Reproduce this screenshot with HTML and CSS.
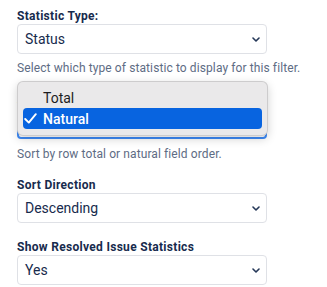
FILE: index.html
```html
<!DOCTYPE html>
<html>
<head>
<meta charset="utf-8">
<link rel="stylesheet" href="styles.css">
</head>
<body>
<div class="form">
  <div class="field">
    <div class="label">Statistic Type:</div>
    <div class="select"><span class="value">Status</span><svg class="chev" width="8" height="5" viewBox="0 0 8 5"><path d="M1 1 L4 4 L7 1" fill="none" stroke="#253858" stroke-width="1.6" stroke-linecap="round" stroke-linejoin="round"/></svg></div>
    <div class="help">Select which type of statistic to display for this filter.</div>
  </div>
  <div class="field sort-by">
    <div class="label">Sort By</div>
    <div class="anchor">
      <div class="select focused"><span class="value">Natural</span><svg class="chev" width="8" height="5" viewBox="0 0 8 5"><path d="M1 1 L4 4 L7 1" fill="none" stroke="#253858" stroke-width="1.6" stroke-linecap="round" stroke-linejoin="round"/></svg></div>
      <div class="menu">
        <div class="opt"><span class="check"></span><span>Total</span></div>
        <div class="opt active"><span class="check"><svg width="13" height="11" viewBox="0 0 13 11"><path d="M1.2 6 L4.8 9.6 L11.8 1.2" fill="none" stroke="#ffffff" stroke-width="1.9" stroke-linecap="round" stroke-linejoin="round"/></svg></span><span>Natural</span></div>
      </div>
    </div>
    <div class="help">Sort by row total or natural field order.</div>
  </div>
  <div class="field sort-dir">
    <div class="label">Sort Direction</div>
    <div class="select"><span class="value">Descending</span><svg class="chev" width="8" height="5" viewBox="0 0 8 5"><path d="M1 1 L4 4 L7 1" fill="none" stroke="#253858" stroke-width="1.6" stroke-linecap="round" stroke-linejoin="round"/></svg></div>
  </div>
  <div class="field">
    <div class="label">Show Resolved Issue Statistics</div>
    <div class="select"><span class="value">Yes</span><svg class="chev" width="8" height="5" viewBox="0 0 8 5"><path d="M1 1 L4 4 L7 1" fill="none" stroke="#253858" stroke-width="1.6" stroke-linecap="round" stroke-linejoin="round"/></svg></div>
  </div>
</div>
</body>
</html>
```
FILE: styles.css
```css
html, body {
  margin: 0;
  padding: 0;
  background: #ffffff;
}
body {
  font-family: Roboto, "Liberation Sans", Arial, sans-serif;
  color: #172b4d;
  overflow: hidden;
}
.form {
  padding: 8px 0 0 17px;
}
.field + .field {
  margin-top: 16px;
}
.field.sort-by {
  margin-top: 17px;
}
.field.sort-dir {
  margin-top: 15px;
}
.sort-by .help {
  margin-top: 7px;
}
.label {
  font-size: 12px;
  font-weight: 700;
  line-height: 16px;
  letter-spacing: 0.3px;
  color: #172b4d;
  white-space: nowrap;
}
.select {
  box-sizing: border-box;
  height: 30px;
  width: 250px;
  border: 1px solid #dfe1e6;
  border-radius: 4px;
  background: #fff;
  display: flex;
  align-items: center;
  justify-content: space-between;
  padding: 0 6px 0 7px;
}
.select.focused {
  border: 2px solid #3d8af7;
  padding-left: 6px;
}
.value {
  font-size: 14px;
  color: #172b4d;
}
.chev {
  display: block;
}
.help {
  margin-top: 6px;
  font-size: 12px;
  line-height: 16px;
  letter-spacing: 0.1px;
  color: #5e6c84;
  white-space: nowrap;
}
.anchor {
  position: relative;
  width: 250px;
}
.menu {
  position: absolute;
  left: 0;
  top: -28px;
  width: 251px;
  box-sizing: border-box;
  padding: 5px 5px 6px;
  background: #eae9ea;
  border: 1px solid rgba(0, 0, 0, 0.12);
  border-radius: 6px;
  box-shadow: 0 3px 10px rgba(0, 0, 0, 0.18);
}
.opt {
  display: flex;
  align-items: center;
  height: 21px;
  border-radius: 4px;
  font-size: 14px;
  color: #1d1d1f;
}
.opt .check {
  width: 19px;
  padding-left: 1px;
  display: flex;
  align-items: center;
}
.opt.active {
  background: #0864e0;
  color: #ffffff;
  font-weight: 500;
}
```
